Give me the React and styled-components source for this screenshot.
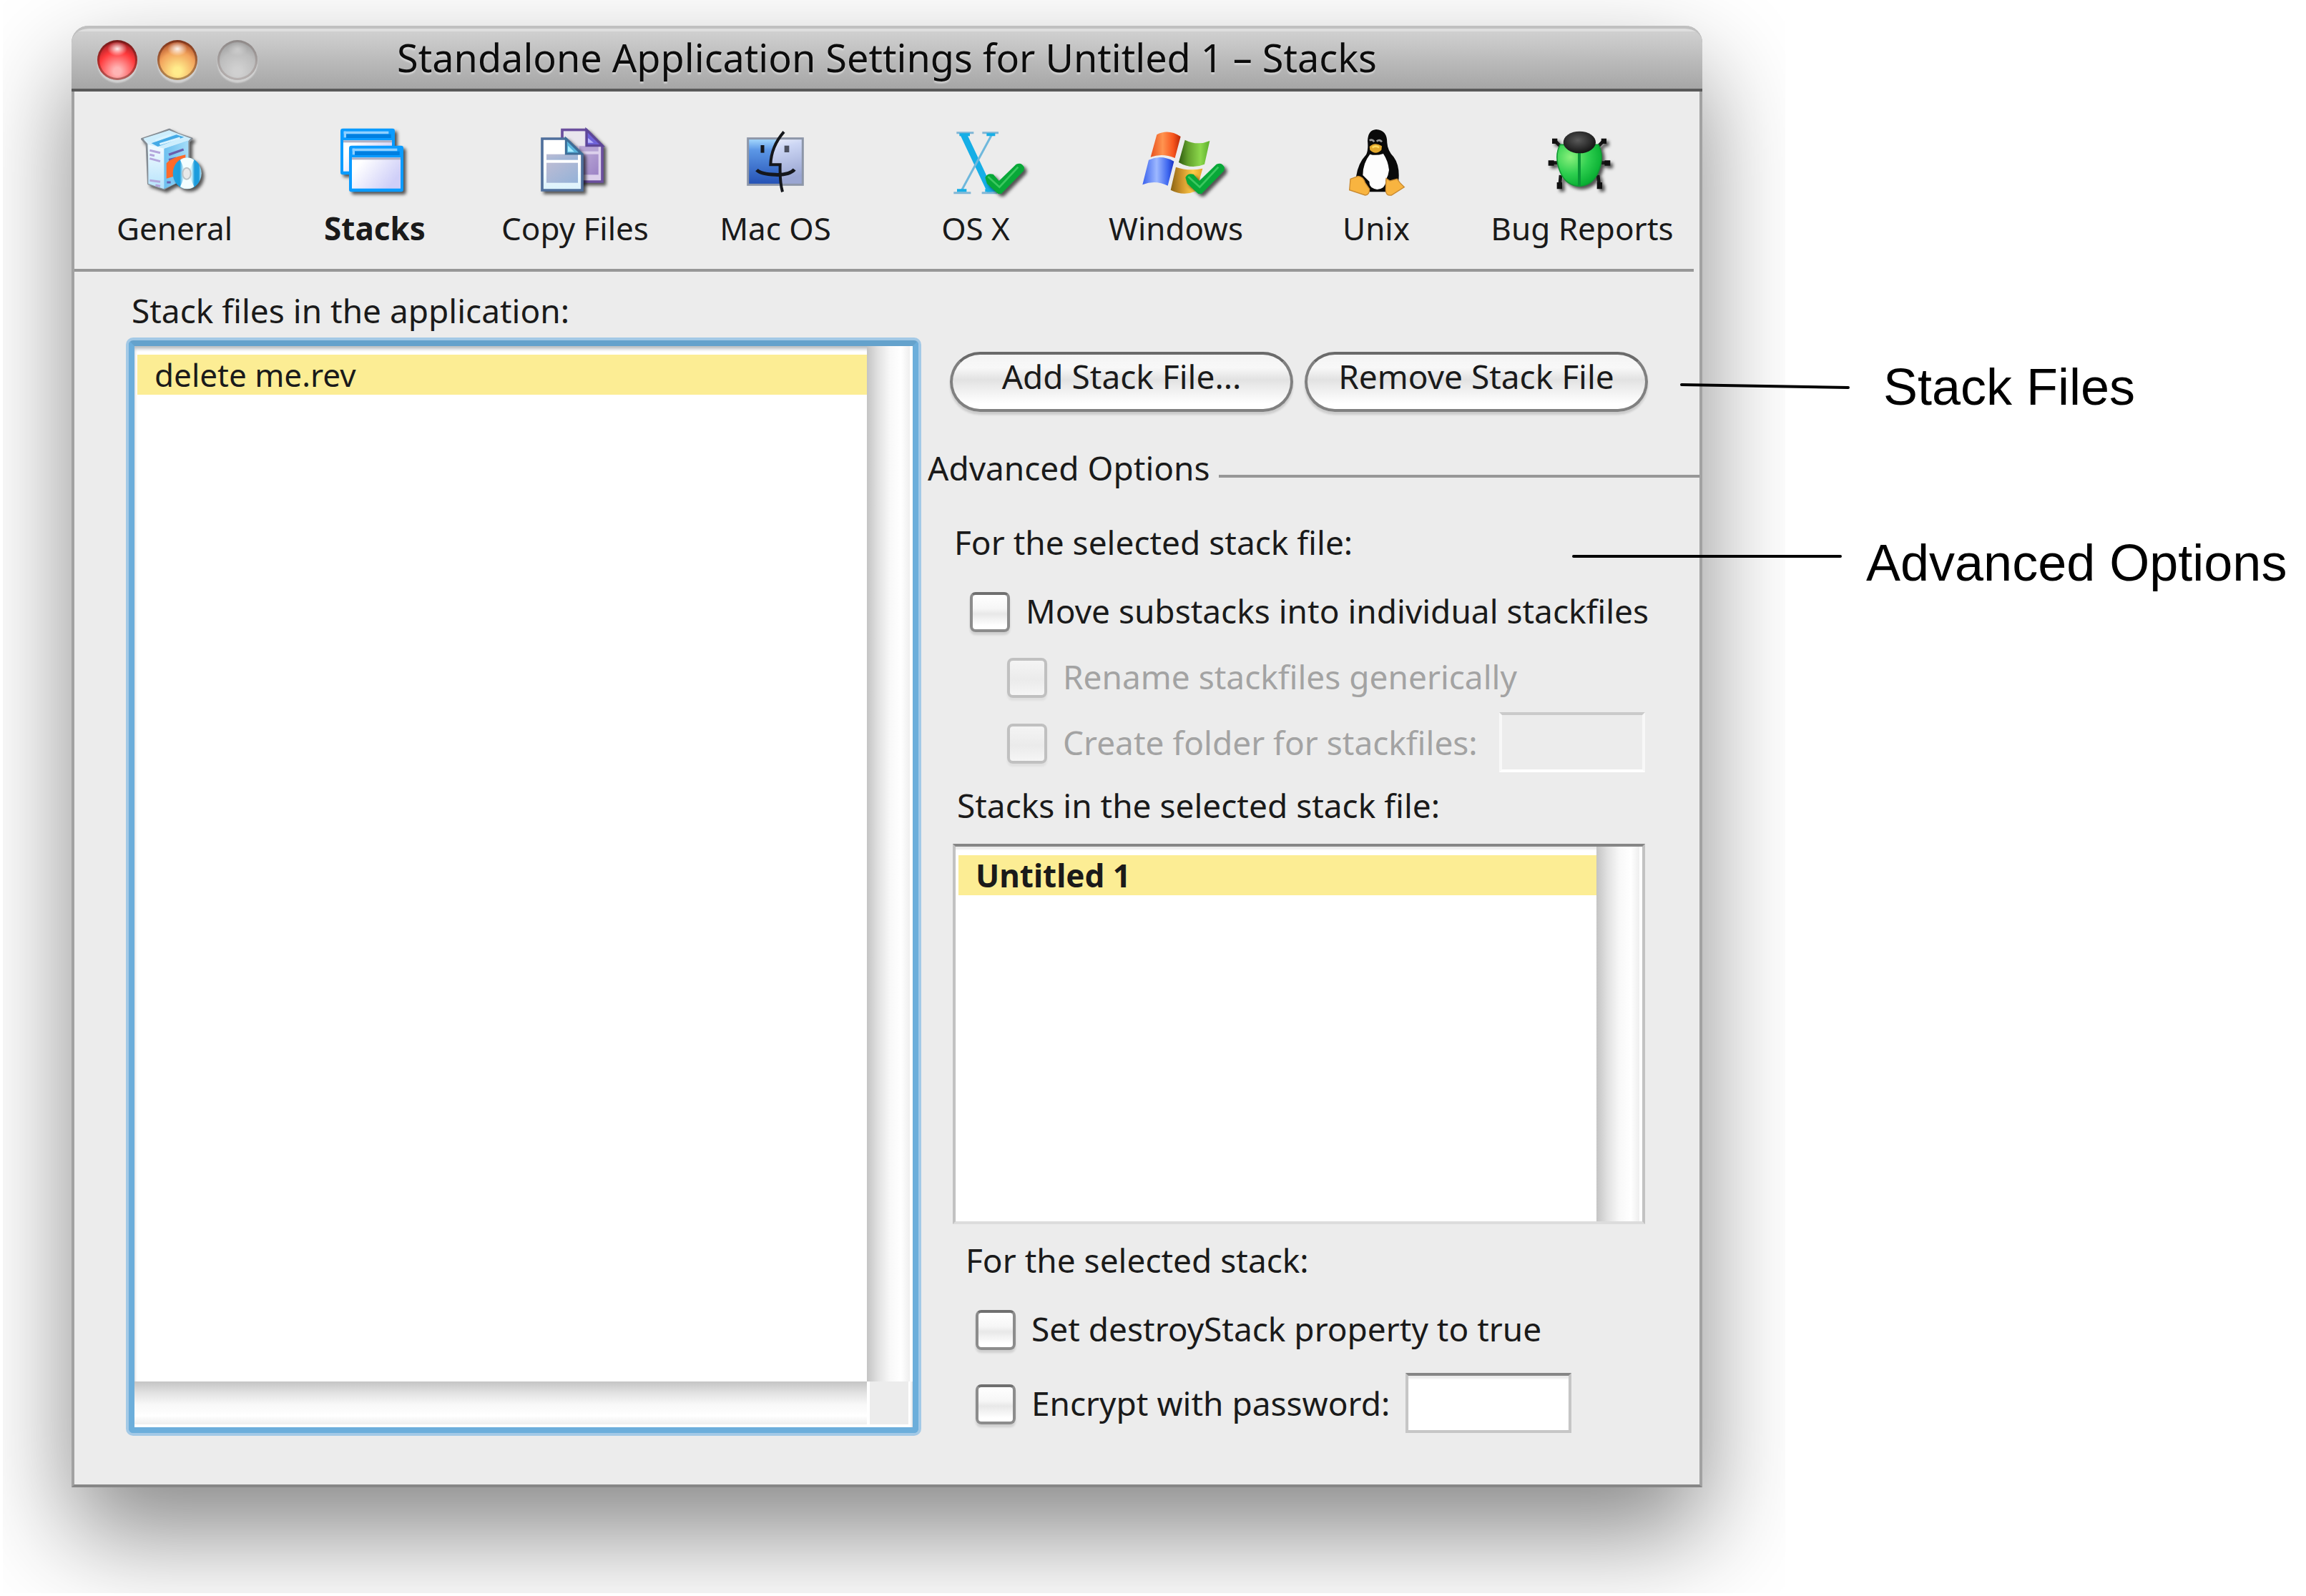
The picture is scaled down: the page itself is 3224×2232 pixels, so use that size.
import React, { useId, useState } from "react";
import styled, { createGlobalStyle, css } from "styled-components";

const UI_FONT = '"Noto Sans", "Open Sans", sans-serif';
const NOTE_FONT = '"Liberation Sans", Arial, sans-serif';
const INK = "#1a1a1a";
const RULE = "#979797";
const PANEL = "#ececec";

const GlobalStyle = createGlobalStyle`
  * { box-sizing: border-box; }
  body { margin: 0; background: #ffffff; }
  button, input { font: inherit; color: inherit; }
`;

const Page = styled.div`
  display: grid;
  grid-template-columns: minmax(0, 1fr) 844px;
  align-items: start;
  padding-left: 100px;
  overflow: hidden;
`;

/* ---------- window ---------- */

const Window = styled.main`
  margin: 36px 0 152px;
  border: solid #a2a2a2;
  border-width: 0 4px 4px;
  border-bottom-color: #868686;
  border-radius: 24px 24px 0 0;
  background: ${PANEL};
  box-shadow: 0 64px 140px rgba(0, 0, 0, 0.47);
  clip-path: inset(-36px -116px -148px -96px);
  font: 46px/60px ${UI_FONT};
  color: ${INK};
`;

const TitleBar = styled.header`
  display: grid;
  grid-template-columns: 1fr auto 1fr;
  align-items: center;
  height: 92px;
  margin: 0 -4px;
  padding: 4px 36px 0;
  border: solid #c0c0c0;
  border-width: 4px 0 0;
  border-bottom: 4px solid #5a5a5a;
  border-radius: 24px 24px 0 0;
  background: linear-gradient(#dedede 0 4px, #d0d0d0 4px, #a6a6a6);
`;

const Lights = styled.div`
  display: flex;
  gap: 28px;
`;

const lightFills = {
  close: ["#6d0a12", "#ff3a3c", "#ffb4b4"],
  minimize: ["#8a1d08", "#f2a35c", "#ffec8c"],
  zoom: ["#8e8e8e", "#bdbdbd", "#d0d0d0"],
};

const Light = styled.button`
  width: 56px;
  height: 56px;
  padding: 0;
  border: 3px solid rgba(70, 30, 20, ${(p) => (p.$kind === "zoom" ? 0.15 : 0.4)});
  border-radius: 50%;
  background: radial-gradient(ellipse 14px 10px at 50% 22%, rgba(255, 255, 255, ${(p) => (p.$kind === "zoom" ? 0.3 : 0.9)}), transparent),
    radial-gradient(circle at 50% 78%, ${(p) => lightFills[p.$kind][2]} 10%, ${(p) => lightFills[p.$kind][1]} 52%, ${(p) => lightFills[p.$kind][0]} 96%);
  background-origin: border-box;
  box-shadow: 0 4px 2px rgba(255, 255, 255, 0.45);
`;

const Title = styled.h1`
  margin: 0;
  padding-bottom: 8px;
  font-size: 54px;
  line-height: 68px;
  font-weight: 400;
  color: #0c0c0c;
  text-shadow: 0 3px 2px rgba(255, 255, 255, 0.4);
`;

/* ---------- toolbar ---------- */

const Toolbar = styled.nav`
  display: grid;
  grid-template-columns: repeat(7, 35fr) 37fr;
  margin-right: 8px;
  padding: 47px 8px 27px 0;
  border-bottom: 4px solid ${RULE};
`;

const Tab = styled.button`
  display: flex;
  flex-direction: column;
  align-items: center;
  gap: 9px;
  padding: 0;
  border: 0;
  background: none;
  font-size: 44px;
  font-weight: ${(p) => (p.$active ? 700 : 400)};
  white-space: nowrap;
`;

const IconArt = styled.svg`
  width: 144px;
  height: 105px;
  overflow: visible;
`;

const Shaded = styled.g`
  filter: drop-shadow(11px 11px 6px rgba(0, 0, 0, 0.65));
`;

const Icon = ({ x, children }) => (
  <IconArt viewBox={`${x} 30 432 315`} aria-hidden="true">
    {children}
  </IconArt>
);

const GeneralIcon = () => (
  <Icon x={-24}>
    <defs>
      <linearGradient id="boxFront" x1="0" y1="0" x2="0" y2="1">
        <stop offset="0" stopColor="#f4fbff" />
        <stop offset="1" stopColor="#b5e3fb" />
      </linearGradient>
      <linearGradient id="boxSide" x1="0" y1="0" x2="1" y2="0">
        <stop offset="0" stopColor="#6cc0f0" />
        <stop offset="1" stopColor="#a4dcf8" />
      </linearGradient>
      <linearGradient id="disc" x1="0" y1="0" x2="1" y2="0">
        <stop offset="0" stopColor="#23a3df" />
        <stop offset=".24" stopColor="#1c9ddd" />
        <stop offset=".36" stopColor="#d4f2fc" />
        <stop offset=".66" stopColor="#d0f2fa" />
        <stop offset=".76" stopColor="#1c9ddd" />
        <stop offset=".9" stopColor="#1c9ddd" />
        <stop offset="1" stopColor="#bfe9fa" />
      </linearGradient>
    </defs>
    <Shaded>
      <path d="M75 110 L55 88 L120 66 L170 48 L205 66 L265 86 L252 100 V240 L148 298 L82 276 Z" fill="#d6effc" stroke="#858c93" strokeWidth="8" strokeLinejoin="round" />
      <path d="M82 112 L148 128 V298 L82 276 Z" fill="url(#boxFront)" />
      <path d="M148 128 L250 94 V250 L148 298 Z" fill="url(#boxSide)" />
      <path d="M60 86 L170 52 L262 86 L148 128 Z" fill="#cdeefd" />
      <path d="M95 106 L200 70 L232 80 L122 120 Z" fill="#45aae6" />
      <path d="M130 110 L215 84 M112 94 L178 70" stroke="#d9f3ff" strokeWidth="9" />
      <path d="M88 136 L132 146 M88 154 L108 158 M88 170 L132 182 M88 262 L132 268 M112 282 L132 286" stroke="#b3a6dc" strokeWidth="9" />
      <path d="M168 154 L230 132 M168 176 L200 168" stroke="#6a5fae" strokeWidth="10" />
      <path d="M158 190 Q180 166 238 154 V180 Q200 190 186 246 L158 254 Z" fill="#ff6a2a" />
      <path d="M160 270 H176" stroke="#6a5fae" strokeWidth="9" />
    </Shaded>
    <Shaded>
      <ellipse cx="245" cy="232" rx="60" ry="66" fill="url(#disc)" />
    </Shaded>
    <path d="M216 176 Q245 158 274 176 L258 212 H232 Z M216 288 Q245 304 274 288 L258 252 H232 Z" fill="#f3feff" />
    <ellipse cx="243" cy="233" rx="17" ry="24" fill="#e9e9e9" stroke="#bdc3c6" strokeWidth="6" />
  </Icon>
);

const Pane = ({ x, y }) => (
  <g>
    <rect x={x} y={y} width="228" height="194" rx="10" fill="#0a9bff" />
    <rect x={x + 14} y={y + 12} width="188" height="11" fill="#8fd0ff" />
    <rect x={x + 14} y={y + 12} width="10" height="26" fill="#8fd0ff" />
    <rect x={x + 24} y={y + 24} width="188" height="16" fill="#007fe0" />
    <rect x={x + 12} y={y + 50} width="204" height="130" fill="url(#paneFill)" />
    <rect x={x + 12} y={y + 50} width="204" height="9" fill="#b0b0c4" />
  </g>
);

const StacksIcon = () => (
  <Icon x={816}>
    <defs>
      <linearGradient id="paneFill" x1="0" y1="0" x2="1" y2=".5">
        <stop offset=".2" stopColor="#ffffff" />
        <stop offset="1" stopColor="#cfcff8" />
      </linearGradient>
    </defs>
    <Shaded>
      <Pane x={888} y={44} />
    </Shaded>
    <Shaded>
      <Pane x={924} y={116} />
    </Shaded>
  </Icon>
);

const CopyIcon = () => (
  <Icon x={6}>
    <defs>
      <linearGradient id="backBlock" x1="0" y1="0" x2="1" y2="1">
        <stop offset="0" stopColor="#bba8d6" />
        <stop offset="1" stopColor="#9c84c6" />
      </linearGradient>
      <linearGradient id="frontBlock" x1="0" y1="0" x2="1" y2="1">
        <stop offset="0" stopColor="#bcbcd4" />
        <stop offset="1" stopColor="#94b2d8" />
      </linearGradient>
      <linearGradient id="frontPage" x1="0" y1="0" x2="0" y2="1">
        <stop offset=".5" stopColor="#ffffff" />
        <stop offset="1" stopColor="#d9f1fb" />
      </linearGradient>
    </defs>
    <Shaded>
      <path d="M168 50 H270 L336 116 V267 H168 Z" fill="#dcd0ec" stroke="#6b4f9e" strokeWidth="11" />
    </Shaded>
    <rect x="174" y="56" width="88" height="60" fill="#e9e6ee" />
    <rect x="240" y="118" width="80" height="22" fill="#b7a4d4" />
    <rect x="240" y="152" width="80" height="86" fill="url(#backBlock)" />
    <path d="M270 50 L336 116 H270 Z" fill="#6f62d8" stroke="#5d4698" strokeWidth="10" />
    <path d="M276 84 L300 104 H276 Z" fill="#b9b4ff" />
    <Shaded>
      <path d="M84 87 H184 L252 152 V303 H84 Z" fill="url(#frontPage)" stroke="#4f6f9c" strokeWidth="11" />
    </Shaded>
    <rect x="102" y="152" width="132" height="24" fill="url(#frontBlock)" />
    <rect x="102" y="188" width="132" height="84" fill="url(#frontBlock)" />
    <path d="M184 87 L248 150 H184 Z" fill="#59b4dc" stroke="#3d6d98" strokeWidth="9" />
    <path d="M192 116 L218 142 H192 Z" fill="#a8ecff" />
  </Icon>
);

const MacIcon = () => (
  <Icon x={846}>
    <defs>
      <linearGradient id="faceLeft" x1="0" y1="0" x2="0" y2="1">
        <stop offset="0" stopColor="#a9dcff" />
        <stop offset=".25" stopColor="#5c97e6" />
        <stop offset="1" stopColor="#2350b4" />
      </linearGradient>
      <linearGradient id="faceRight" x1="0" y1="0" x2=".3" y2="1">
        <stop offset="0" stopColor="#ffffff" />
        <stop offset=".35" stopColor="#ccd6f4" />
        <stop offset="1" stopColor="#9aa6d2" />
      </linearGradient>
    </defs>
    <rect x="947" y="86" width="230" height="194" fill="url(#faceRight)" />
    <path d="M947 86 H1075 Q1045 130 1042 196 H1082 V280 H947 Z" fill="url(#faceLeft)" />
    <rect x="947" y="86" width="230" height="194" fill="none" stroke="#8d96a8" strokeWidth="9" />
    <g fill="none" stroke="#15171c" strokeWidth="12">
      <path d="M1098 58 Q1044 120 1042 196 H1082 Q1080 268 1092 310" />
      <path d="M984 218 Q1000 236 1062 238 Q1122 240 1142 216" strokeWidth="15" />
      <path d="M1008 114 V146" strokeWidth="15" />
      <path d="M1110 116 V144" strokeWidth="20" stroke="#4a4f5e" />
    </g>
  </Icon>
);

const CheckBadge = ({ dx = 0 }) => (
  <Shaded transform={`translate(${dx} 0)`}>
    <path d="M172 250 Q180 230 206 236 L230 264 L302 194 Q326 184 336 208 L334 222 L240 318 H226 L180 276 Z" fill="#08a838" />
    <path d="M184 246 L232 290 L310 206" fill="none" stroke="#3cc860" strokeWidth="8" />
  </Shaded>
);

const OsxIcon = () => (
  <Icon x={-84}>
    <g fill="none" stroke="#16aee6">
      <path d="M80 66 L196 312" strokeWidth="27" />
      <path d="M200 70 L72 306" strokeWidth="9" stroke="#6fb8dc" />
      <path d="M52 62 H124 M160 62 H228 M40 314 H112 M158 314 H222" strokeWidth="9" stroke="#7fb6d6" />
      <path d="M64 70 H108 M178 70 H214 M54 304 H94 M172 304 H216" strokeWidth="12" />
    </g>
    <CheckBadge />
  </Icon>
);

const WindowsIcon = () => (
  <Icon x={756}>
    <defs>
      <linearGradient id="flagRed"><stop offset="0" stopColor="#e8501c" /><stop offset=".4" stopColor="#ff9450" /><stop offset=".75" stopColor="#f8561e" /><stop offset="1" stopColor="#b82808" /></linearGradient>
      <linearGradient id="flagGreen"><stop offset="0" stopColor="#2f5a10" /><stop offset=".3" stopColor="#62a02c" /><stop offset=".7" stopColor="#8cd84c" /><stop offset="1" stopColor="#5cae2c" /></linearGradient>
      <linearGradient id="flagBlue"><stop offset="0" stopColor="#3a62ee" /><stop offset=".45" stopColor="#9db8ff" /><stop offset=".8" stopColor="#3f68f0" /><stop offset="1" stopColor="#1830c0" /></linearGradient>
      <linearGradient id="flagGold"><stop offset="0" stopColor="#8a6414" /><stop offset=".35" stopColor="#d0962c" /><stop offset=".7" stopColor="#ffcc48" /><stop offset="1" stopColor="#e0a428" /></linearGradient>
    </defs>
    <path d="M892 70 Q940 44 992 78 L968 168 Q916 146 866 164 Z" fill="url(#flagRed)" />
    <path d="M1010 92 Q1062 118 1114 96 L1092 194 Q1036 218 984 186 Z" fill="url(#flagGreen)" />
    <path d="M858 176 Q910 152 964 182 L938 284 Q886 258 832 280 Z" fill="url(#flagBlue)" />
    <path d="M972 206 Q1024 224 1084 212 L1058 306 Q1004 330 950 302 Z" fill="url(#flagGold)" />
    <CheckBadge dx={840} />
  </Icon>
);

const UnixIcon = () => (
  <Icon x={-24}>
    <path d="M192 48 Q238 50 238 104 Q240 138 266 164 Q292 200 286 262 L250 310 H150 L108 246 Q116 190 150 154 Q160 134 156 96 Q158 50 192 48 Z" fill="#0a0a0a" />
    <path d="M166 152 Q190 160 222 150 Q242 180 246 218 Q244 240 232 262 Q234 296 196 300 Q160 292 164 268 L136 240 Q136 190 166 152 Z" fill="#fdfdfd" />
    <path d="M164 94 Q176 88 184 100 M194 98 Q206 88 216 100" fill="none" stroke="#9a9a9a" strokeWidth="8" />
    <path d="M164 120 Q186 98 216 118 L214 134 Q190 158 166 134 Z" fill="#e3a82c" />
    <path d="M176 124 Q190 114 204 124" fill="none" stroke="#ffdc60" strokeWidth="8" />
    <path d="M84 256 L116 244 Q138 246 146 272 L164 298 Q164 324 146 324 L80 302 Z" fill="#f8b440" stroke="#c98a30" strokeWidth="4" />
    <path d="M234 254 L250 264 L280 256 L292 272 L310 290 L256 324 Q232 328 232 300 Z" fill="#f8b440" stroke="#c98a30" strokeWidth="4" />
  </Icon>
);

const BugIcon = () => (
  <Icon x={840}>
    <defs>
      <radialGradient id="shell" cx=".3" cy=".3" r=".8">
        <stop offset="0" stopColor="#8af07c" />
        <stop offset=".5" stopColor="#2fcf50" />
        <stop offset="1" stopColor="#00a82c" />
      </radialGradient>
      <radialGradient id="head" cx=".45" cy=".4" r=".6">
        <stop offset="0" stopColor="#5a5a5a" />
        <stop offset="1" stopColor="#141414" />
      </radialGradient>
    </defs>
    <Shaded>
      <path d="M942 96 L976 130 M1146 96 L1112 130 M926 188 H970 M1162 188 H1118 M962 282 L966 240 M1128 282 L1122 240" stroke="#181818" strokeWidth="14" fill="none" />
      <path d="M930 86 h22 v22 h-22z M1136 86 h22 v22 h-22z M914 178 h24 v22 h-24z M1150 178 h24 v22 h-24z M950 270 h22 v28 h-22z M1118 270 h22 v28 h-22z" fill="#101010" />
      <path d="M964 112 Q944 146 954 196 Q976 284 1044 286 Q1112 284 1134 196 Q1144 146 1124 112 Z" fill="url(#shell)" stroke="#119a34" strokeWidth="5" />
    </Shaded>
    <path d="M1044 140 V284" stroke="#0a9436" strokeWidth="12" />
    <ellipse cx="1045" cy="102" rx="68" ry="46" fill="url(#head)" />
  </Icon>
);

/* ---------- body ---------- */

const Body = styled.div`
  display: grid;
  grid-template-columns: minmax(0, 37fr) minmax(0, 34fr);
`;

const FilesColumn = styled.section`
  display: flex;
  flex-direction: column;
  padding: 24px 4px 72px 76px;
`;

const Heading = styled.h2`
  margin: 0;
  padding-left: ${(p) => p.$inset}px;
  font-size: 46px;
  line-height: 60px;
  font-weight: 400;
  white-space: nowrap;
`;

const ListFrame = styled.div`
  display: grid;
  grid-template-columns: minmax(0, 1fr) 64px;
  background: #ffffff;
  ${(p) =>
    p.$focused
      ? css`
          flex: 1;
          grid-template-rows: minmax(0, 1fr) 64px;
          margin-top: 12px;
          border: 8px solid #6caedb;
          border-top-color: #64a2cc;
          border-radius: 6px;
          box-shadow: 0 0 0 4px #a3c9e6, inset 0 4px 4px #b9bec2;
        `
      : css`
          height: 532px;
          margin: 24px 0 20px;
          border: 4px solid #c2c2c2;
          border-top-color: #868686;
          border-bottom-color: #dcdcdc;
          box-shadow: inset 0 4px 2px #ececec;
        `}
`;

const Items = styled.ul`
  margin: 0;
  padding: 12px 0 0 4px;
  list-style: none;
`;

const Item = styled.li`
  padding-left: 24px;
  font-size: 44px;
  line-height: 56px;
  background: #fced94;
  font-weight: ${(p) => (p.$strong ? 700 : 400)};
`;

const track = "#c4c4c4, #e2e2e2 25%, #f8f8f8 50%, #ffffff 75%, #efefef 93%, #ffffff 93%";

const VTrack = styled.div`
  background: linear-gradient(to right, ${track});
`;

const HTrack = styled.div`
  background: linear-gradient(${track});
`;

const Corner = styled.div`
  margin: 0 6px 4px 4px;
  background: ${PANEL};
`;

const OptionsColumn = styled.section`
  padding: 112px 0 72px;
`;

const Inset = styled.div`
  padding: 0 76px 0 44px;
`;

const Actions = styled.div`
  display: grid;
  grid-template-columns: 1fr 1fr;
  gap: 16px;
  padding: 0 72px 0 40px;
`;

const PushButton = styled.button`
  height: 84px;
  padding: 0 0 16px;
  border: 4px solid #808080;
  border-top-color: #6a6a6a;
  border-radius: 42px;
  background: linear-gradient(#f4f4f4, #f8f8f8 24%, #e2e2e2 46%, #ececec 60%, #ffffff 90%);
  box-shadow: 0 4px 3px rgba(0, 0, 0, 0.14);
  white-space: nowrap;
`;

const Divider = styled.div`
  display: flex;
  gap: 12px;
  margin: 48px 0 44px;
  padding-left: 9px;
`;

const DividerRule = styled.hr`
  flex: 1;
  height: 4px;
  margin: 40px 0 0;
  border: 0;
  background: ${RULE};
`;

const Options = styled.div`
  display: flex;
  flex-direction: column;
  gap: ${(p) => p.$gap}px;
  padding: ${(p) => (p.$gap > 8 ? "24px 0 0 32px" : "24px 0 16px 24px")};
`;

const OptionRow = styled.div`
  display: flex;
  align-items: center;
  gap: 22px;
  height: 84px;
  padding-left: ${(p) => (p.$nested ? 52 : 0)}px;
  color: ${(p) => (p.$disabled ? "#a3a3a3" : INK)};
  white-space: nowrap;
`;

const Tick = styled.input`
  appearance: none;
  flex: none;
  width: 56px;
  height: 56px;
  margin: 4px 0 0;
  border: 4px solid #8c8c8c;
  border-top-color: #6f6f6f;
  border-radius: 8px;
  background: linear-gradient(#ffffff, #f6f6f6 40%, #e8e8e8 55%, #ffffff 90%);
  box-shadow: 0 4px 3px rgba(0, 0, 0, 0.12);

  &:checked {
    background: #6caedb;
  }

  &:disabled {
    border-color: #c0c0c0;
    background: linear-gradient(#f4f4f4, #ebebeb 55%, #f5f5f5);
    box-shadow: 0 4px 3px rgba(0, 0, 0, 0.05);
  }
`;

const Field = styled.input`
  width: ${(p) => p.$width}px;
  height: 84px;
  padding: 0 12px;
  border: 4px solid #c6c6c6;
  border-top-color: #868686;
  border-radius: 0;
  background: #ffffff;
  box-shadow: inset 0 4px 2px #ececec;

  &:disabled {
    margin-left: auto;
    border-color: #cacaca #f8f8f8 #ffffff;
    background: ${PANEL};
    box-shadow: none;
  }
`;

function Option({ label, field, disabled, nested }) {
  const id = useId();
  const [on, setOn] = useState(false);
  return (
    <OptionRow $nested={nested} $disabled={disabled}>
      <Tick id={id} type="checkbox" checked={on} disabled={disabled} onChange={(e) => setOn(e.target.checked)} />
      <label htmlFor={id}>{label}</label>
      {field && <Field type={field.type} $width={field.width} disabled={disabled} aria-label={label} />}
    </OptionRow>
  );
}

/* ---------- callouts ---------- */

const Callouts = styled.aside`
  display: flex;
  flex-direction: column;
  gap: 162px;
  padding-top: 499px;
  font: 72px/84px ${NOTE_FONT};
  color: #000000;
`;

const Callout = styled.div`
  position: relative;
  margin-left: ${(p) => p.$indent}px;
  white-space: nowrap;
`;

const Leader = styled.svg`
  position: absolute;
  top: 0;
  right: 100%;
  width: ${(p) => p.$length}px;
  height: 84px;
  margin-right: ${(p) => p.$gap}px;
  overflow: visible;
`;

const notes = [
  { text: "Stack Files", indent: 253, length: 237, gap: 47, from: 39, to: 43 },
  { text: "Advanced Options", indent: 229, length: 377, gap: 34, from: 33, to: 33 },
];

const tabs = [
  ["General", GeneralIcon],
  ["Stacks", StacksIcon],
  ["Copy Files", CopyIcon],
  ["Mac OS", MacIcon],
  ["OS X", OsxIcon],
  ["Windows", WindowsIcon],
  ["Unix", UnixIcon],
  ["Bug Reports", BugIcon],
];

export default function App() {
  return (
    <>
      <GlobalStyle />
      <Page>
        <Window>
          <TitleBar>
            <Lights>
              <Light $kind="close" aria-label="Close" />
              <Light $kind="minimize" aria-label="Minimize" />
              <Light $kind="zoom" aria-label="Zoom" />
            </Lights>
            <Title>Standalone Application Settings for Untitled 1 – Stacks</Title>
          </TitleBar>

          <Toolbar>
            {tabs.map(([name, Art]) => (
              <Tab key={name} $active={name === "Stacks"}>
                <Art />
                <span>{name}</span>
              </Tab>
            ))}
          </Toolbar>

          <Body>
            <FilesColumn>
              <Heading $inset={4}>Stack files in the application:</Heading>
              <ListFrame $focused>
                <Items>
                  <Item>delete me.rev</Item>
                </Items>
                <VTrack />
                <HTrack />
                <Corner />
              </ListFrame>
            </FilesColumn>

            <OptionsColumn>
              <Actions>
                <PushButton>Add Stack File...</PushButton>
                <PushButton>Remove Stack File</PushButton>
              </Actions>
              <Divider>
                <Heading $inset={0}>Advanced Options</Heading>
                <DividerRule />
              </Divider>
              <Inset>
                <Heading $inset={2}>For the selected stack file:</Heading>
                <Options $gap={8}>
                  <Option label="Move substacks into individual stackfiles" />
                  <Option label="Rename stackfiles generically" nested disabled />
                  <Option label="Create folder for stackfiles:" nested disabled field={{ type: "text", width: 204 }} />
                </Options>
                <Heading $inset={6}>Stacks in the selected stack file:</Heading>
                <ListFrame>
                  <Items>
                    <Item $strong>Untitled 1</Item>
                  </Items>
                  <VTrack />
                </ListFrame>
                <Heading $inset={18}>For the selected stack:</Heading>
                <Options $gap={20}>
                  <Option label="Set destroyStack property to true" />
                  <Option label="Encrypt with password:" field={{ type: "password", width: 232 }} />
                </Options>
              </Inset>
            </OptionsColumn>
          </Body>
        </Window>

        <Callouts>
          {notes.map((n) => (
            <Callout key={n.text} $indent={n.indent}>
              <Leader $length={n.length} $gap={n.gap} viewBox={`0 0 ${n.length} 84`} aria-hidden="true">
                <line x1="2" y1={n.from} x2={n.length - 2} y2={n.to} stroke="#000" strokeWidth="4" strokeLinecap="round" />
              </Leader>
              {n.text}
            </Callout>
          ))}
        </Callouts>
      </Page>
    </>
  );
}
